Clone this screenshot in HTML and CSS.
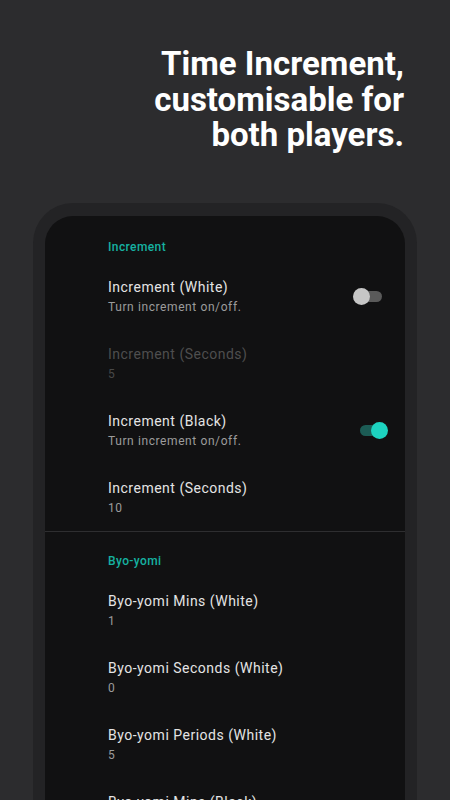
FILE: index.html
```html
<!DOCTYPE html>
<html>
<head>
<meta charset="utf-8">
<link rel="stylesheet" href="styles.css">
</head>
<body>
<div class="page">
  <h1 class="hero">Time Increment,<br>customisable for<br>both players.</h1>
  <div class="phone">
    <div class="screen">
      <div class="section">
        <div class="section-title">Increment</div>
        <div class="row">
          <div class="text">
            <div class="title">Increment (White)</div>
            <div class="sub">Turn increment on/off.</div>
          </div>
          <div class="switch"><span class="track"></span><span class="thumb"></span></div>
        </div>
        <div class="row disabled">
          <div class="text">
            <div class="title">Increment (Seconds)</div>
            <div class="sub">5</div>
          </div>
        </div>
        <div class="row">
          <div class="text">
            <div class="title">Increment (Black)</div>
            <div class="sub">Turn increment on/off.</div>
          </div>
          <div class="switch on"><span class="track"></span><span class="thumb"></span></div>
        </div>
        <div class="row">
          <div class="text">
            <div class="title">Increment (Seconds)</div>
            <div class="sub">10</div>
          </div>
        </div>
      </div>
      <div class="divider"></div>
      <div class="section">
        <div class="section-title">Byo-yomi</div>
        <div class="row">
          <div class="text">
            <div class="title">Byo-yomi Mins (White)</div>
            <div class="sub">1</div>
          </div>
        </div>
        <div class="row">
          <div class="text">
            <div class="title">Byo-yomi Seconds (White)</div>
            <div class="sub">0</div>
          </div>
        </div>
        <div class="row">
          <div class="text">
            <div class="title">Byo-yomi Periods (White)</div>
            <div class="sub">5</div>
          </div>
        </div>
        <div class="row">
          <div class="text">
            <div class="title">Byo-yomi Mins (Black)</div>
          </div>
        </div>
      </div>
    </div>
  </div>
</div>
</body>
</html>
```

FILE: styles.css
```css
html, body {
  margin: 0;
  padding: 0;
  background: #2c2c2e;
}
body {
  width: 450px;
  height: 800px;
  overflow: hidden;
  font-family: Roboto, "Liberation Sans", sans-serif;
}
.page {
  display: flex;
  flex-direction: column;
  height: 800px;
  overflow: hidden;
}
.hero {
  margin: 0;
  padding: 46px 46px 0 0;
  text-align: right;
  color: #ffffff;
  font-family: Roboto, "Liberation Sans", sans-serif;
  font-weight: 700;
  font-size: 33px;
  line-height: 35.5px;
  letter-spacing: 0;
}
.phone {
  margin: 50.5px 0 0 33px;
  width: 360px;
  padding: 13px 12px 0 12px;
  background: #232325;
  border-radius: 40px 40px 0 0;
  flex: 1;
  min-height: 0;
  display: flex;
}
.screen {
  flex: 1;
  background: #111112;
  border-radius: 28px 28px 0 0;
  overflow: hidden;
}
.section {
  padding-top: 23px;
}
.divider + .section {
  padding-top: 21px;
}
.section-title {
  padding-left: 63px;
  font-size: 12px;
  line-height: 17px;
  font-weight: 500;
  letter-spacing: 0.4px;
  color: #16b1a1;
  margin-bottom: 7px;
}
.row {
  display: flex;
  align-items: center;
  padding: 14px 17px 14px 63px;
}
.text {
  flex: 1;
}
.title {
  font-size: 14px;
  line-height: 21px;
  letter-spacing: 0.5px;
  color: #e4e4e4;
}
.sub {
  font-size: 12px;
  line-height: 18px;
  letter-spacing: 0.6px;
  color: #9c9c9c;
}
.disabled .title {
  color: #4e4e4e;
}
.disabled .sub {
  color: #484848;
}
.divider {
  height: 1px;
  background: #2e2e30;
}
.switch {
  position: relative;
  width: 35px;
  height: 17px;
}
.switch .track {
  position: absolute;
  left: 7px;
  top: 3px;
  width: 22px;
  height: 11px;
  border-radius: 6px;
  background: #5a5a5a;
}
.switch .thumb {
  position: absolute;
  left: 0;
  top: 0;
  width: 17px;
  height: 17px;
  border-radius: 50%;
  background: #c6c6c6;
}
.switch.on .track {
  background: #1c5c55;
}
.switch.on .thumb {
  left: 18px;
  background: #1dd3c0;
}
```
